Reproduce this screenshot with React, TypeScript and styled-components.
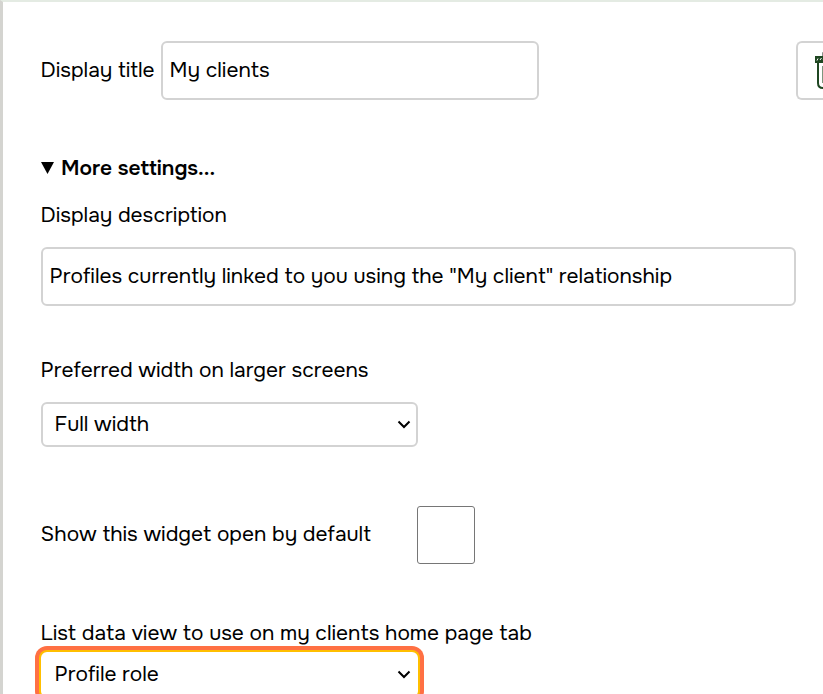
import React from 'react';
import styled, { createGlobalStyle } from 'styled-components';

const Global = createGlobalStyle`
  *, *::before, *::after { box-sizing: border-box; }
  body {
    margin: 0;
    background: #fff;
    color: #000;
    font-family: Onest, Inter, sans-serif;
    font-size: 20.94px;
    line-height: 27px;
    overflow: hidden;
  }
`;

const Page = styled.main`
  display: flex;
  flex-direction: column;
  align-items: flex-start;
  width: 100%;
  height: 694px;
  overflow: hidden;
  padding: 39px 0 0 38px;
  border-top: 2px solid #e4ebe3;
  border-left: 3px solid #d4d4d0;

  > * { flex-shrink: 0; }
`;

const TitleRow = styled.div`
  display: flex;
  align-items: center;
  width: 100%;
  height: 59px;
  margin-bottom: 55px;
`;

const Label = styled.label<{ $gap?: number }>`
  display: block;
  flex-shrink: 0;
  white-space: nowrap;
  margin-left: -0.4px;
  margin-bottom: ${(p) => p.$gap ?? 0}px;
`;

const TitleLabel = styled(Label)`
  width: 114.4px;
  padding-bottom: 1px;
`;

const WidthLabel = styled(Label)`
  margin-top: 51px;
`;

const CheckLabel = styled(Label)`
  width: 376.4px;
  padding-bottom: 2px;
`;

const TextInput = styled.input<{ $width: number }>`
  flex-shrink: 0;
  width: ${(p) => p.$width}px;
  height: 59px;
  padding: 0 6.6px 2px;
  border: 2px solid #d3d3d3;
  border-radius: 6px;
  background: #fff;
  color: #000;
  font: inherit;
  outline: none;
`;

const TitleInput = styled(TextInput)`
  margin-left: 6px;
`;

const DeleteButton = styled.button`
  display: flex;
  flex: 1;
  align-items: flex-start;
  min-width: 0;
  height: 59px;
  margin-left: 257px;
  padding: 9px 0 0 16px;
  border: 2px solid #d3d3d3;
  border-right: 0;
  border-radius: 6px 0 0 6px;
  background: #fff;
  overflow: hidden;

  svg { flex-shrink: 0; }
`;

const Summary = styled.div`
  display: flex;
  align-items: center;
  gap: 7px;
  height: 27px;
  margin-bottom: 20px;
  font-weight: 600;

  svg { margin-top: -1px; }
`;

const SelectBox = styled.div<{ $focused?: boolean }>`
  display: flex;
  align-items: center;
  justify-content: space-between;
  width: 377px;
  height: 45px;
  padding: 0 5px 1px 11.6px;
  border: 2px solid ${(p) => (p.$focused ? '#fff' : '#d3d3d3')};
  border-radius: 6px;
  background: #fff;
  box-shadow: ${(p) => (p.$focused ? '0 0 0 2px #ffbf00, 0 0 0 6px #ff7043' : 'none')};
`;

const CheckRow = styled.div`
  display: flex;
  align-items: center;
  height: 58px;
  margin: 59px 0 56px;
`;

const Checkbox = styled.input`
  appearance: none;
  width: 58px;
  height: 58px;
  margin: 0;
  border: 1px solid #767676;
  border-radius: 3px;
  background: #fff;
`;

const Trash = () => (
  <svg width="32" height="38" viewBox="0 0 32 38" fill="none" stroke="#1f4722">
    <path d="M8.5 4V.5h15V4" stroke="#8a918a" strokeWidth="1" />
    <path d="M1 4h30v7H1z" fill="#1f4722" stroke="none" />
    <path d="M3 8.5l1-2M6 8l1.5-2M9 8l1.5-2" stroke="#fff" />
    <path d="M4 11v20q0 5 5 5h14q5 0 5-5V11" strokeWidth="2" />
    <path d="M8.5 14v17M16 14v17M23.5 14v17" stroke="#7d967e" strokeWidth="1" />
  </svg>
);

const Chevron = () => (
  <svg width="14" height="10" viewBox="0 0 14 10" fill="none" stroke="#000" strokeWidth="2">
    <path d="M1.5 2.5 7 8l5.5-5.5" />
  </svg>
);

const Triangle = () => (
  <svg width="13" height="12" viewBox="0 0 13 12">
    <path d="M0 0h13L6.5 12z" />
  </svg>
);

export default function App() {
  return (
    <>
      <Global />
      <Page>
        <TitleRow>
          <TitleLabel htmlFor="title">Display title</TitleLabel>
          <TitleInput id="title" $width={378} defaultValue="My clients" />
          <DeleteButton aria-label="Delete"><Trash /></DeleteButton>
        </TitleRow>
        <Summary><Triangle />More settings...</Summary>
        <Label htmlFor="description" $gap={18}>Display description</Label>
        <TextInput
          id="description"
          $width={755}
          defaultValue={'Profiles currently linked to you using the "My client" relationship'}
        />
        <WidthLabel $gap={18}>Preferred width on larger screens</WidthLabel>
        <SelectBox>Full width<Chevron /></SelectBox>
        <CheckRow>
          <CheckLabel htmlFor="open">Show this widget open by default</CheckLabel>
          <Checkbox id="open" type="checkbox" />
        </CheckRow>
        <Label $gap={5}>List data view to use on my clients home page tab</Label>
        <SelectBox $focused>Profile role<Chevron /></SelectBox>
      </Page>
    </>
  );
}
